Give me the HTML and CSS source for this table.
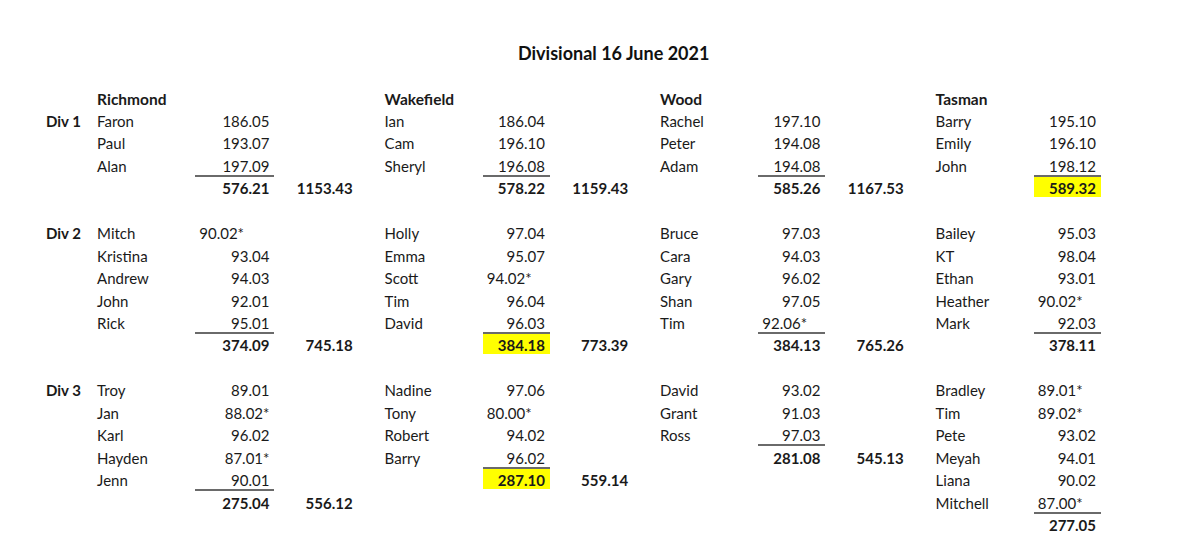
FILE: index.html
```html
<!DOCTYPE html>
<html lang="en">
<head>
<meta charset="utf-8">
<title>Divisional 16 June 2021</title>
<link rel="stylesheet" href="styles.css">
</head>
<body>
<main class="sheet">
  <h1 class="title">Divisional 16 June 2021</h1>
  <table class="grid">
    <colgroup>
      <col class="c-label">
      <col class="c-name"><col class="c-score-wide"><col class="c-total">
      <col class="c-name"><col class="c-score"><col class="c-total">
      <col class="c-name"><col class="c-score"><col class="c-total">
      <col class="c-name"><col class="c-score">
    </colgroup>
    <tbody>
      <tr>
        <td></td>
        <td class="team">Richmond</td><td></td><td></td>
        <td class="team">Wakefield</td><td></td><td></td>
        <td class="team">Wood</td><td></td><td></td>
        <td class="team">Tasman</td><td></td>
      </tr>
      <tr>
        <td class="div">Div 1</td>
        <td class="name">Faron</td><td class="num">186.05</td><td></td>
        <td class="name">Ian</td><td class="num">186.04</td><td></td>
        <td class="name">Rachel</td><td class="num">197.10</td><td></td>
        <td class="name">Barry</td><td class="num">195.10</td>
      </tr>
      <tr>
        <td></td>
        <td class="name">Paul</td><td class="num">193.07</td><td></td>
        <td class="name">Cam</td><td class="num">196.10</td><td></td>
        <td class="name">Peter</td><td class="num">194.08</td><td></td>
        <td class="name">Emily</td><td class="num">196.10</td>
      </tr>
      <tr>
        <td></td>
        <td class="name">Alan</td><td class="num">197.09</td><td></td>
        <td class="name">Sheryl</td><td class="num">196.08</td><td></td>
        <td class="name">Adam</td><td class="num">194.08</td><td></td>
        <td class="name">John</td><td class="num">198.12</td>
      </tr>
      <tr>
        <td></td>
        <td></td><td class="num sum">576.21</td><td class="grand">1153.43</td>
        <td></td><td class="num sum">578.22</td><td class="grand">1159.43</td>
        <td></td><td class="num sum">585.26</td><td class="grand">1167.53</td>
        <td></td><td class="num sum hl">589.32</td>
      </tr>
      <tr class="blank"><td colspan="12"></td></tr>
      <tr>
        <td class="div">Div 2</td>
        <td class="name">Mitch</td><td class="txt">90.02*</td><td></td>
        <td class="name">Holly</td><td class="num">97.04</td><td></td>
        <td class="name">Bruce</td><td class="num">97.03</td><td></td>
        <td class="name">Bailey</td><td class="num">95.03</td>
      </tr>
      <tr>
        <td></td>
        <td class="name">Kristina</td><td class="num">93.04</td><td></td>
        <td class="name">Emma</td><td class="num">95.07</td><td></td>
        <td class="name">Cara</td><td class="num">94.03</td><td></td>
        <td class="name">KT</td><td class="num">98.04</td>
      </tr>
      <tr>
        <td></td>
        <td class="name">Andrew</td><td class="num">94.03</td><td></td>
        <td class="name">Scott</td><td class="txt">94.02*</td><td></td>
        <td class="name">Gary</td><td class="num">96.02</td><td></td>
        <td class="name">Ethan</td><td class="num">93.01</td>
      </tr>
      <tr>
        <td></td>
        <td class="name">John</td><td class="num">92.01</td><td></td>
        <td class="name">Tim</td><td class="num">96.04</td><td></td>
        <td class="name">Shan</td><td class="num">97.05</td><td></td>
        <td class="name">Heather</td><td class="txt">90.02*</td>
      </tr>
      <tr>
        <td></td>
        <td class="name">Rick</td><td class="num">95.01</td><td></td>
        <td class="name">David</td><td class="num">96.03</td><td></td>
        <td class="name">Tim</td><td class="txt">92.06*</td><td></td>
        <td class="name">Mark</td><td class="num">92.03</td>
      </tr>
      <tr>
        <td></td>
        <td></td><td class="num sum">374.09</td><td class="grand">745.18</td>
        <td></td><td class="num sum hl">384.18</td><td class="grand">773.39</td>
        <td></td><td class="num sum">384.13</td><td class="grand">765.26</td>
        <td></td><td class="num sum">378.11</td>
      </tr>
      <tr class="blank"><td colspan="12"></td></tr>
      <tr>
        <td class="div">Div 3</td>
        <td class="name">Troy</td><td class="num">89.01</td><td></td>
        <td class="name">Nadine</td><td class="num">97.06</td><td></td>
        <td class="name">David</td><td class="num">93.02</td><td></td>
        <td class="name">Bradley</td><td class="txt">89.01*</td>
      </tr>
      <tr>
        <td></td>
        <td class="name">Jan</td><td class="num">88.02*</td><td></td>
        <td class="name">Tony</td><td class="txt">80.00*</td><td></td>
        <td class="name">Grant</td><td class="num">91.03</td><td></td>
        <td class="name">Tim</td><td class="txt">89.02*</td>
      </tr>
      <tr>
        <td></td>
        <td class="name">Karl</td><td class="num">96.02</td><td></td>
        <td class="name">Robert</td><td class="num">94.02</td><td></td>
        <td class="name">Ross</td><td class="num">97.03</td><td></td>
        <td class="name">Pete</td><td class="num">93.02</td>
      </tr>
      <tr>
        <td></td>
        <td class="name">Hayden</td><td class="num">87.01*</td><td></td>
        <td class="name">Barry</td><td class="num">96.02</td><td></td>
        <td></td><td class="num sum">281.08</td><td class="grand">545.13</td>
        <td class="name">Meyah</td><td class="num">94.01</td>
      </tr>
      <tr>
        <td></td>
        <td class="name">Jenn</td><td class="num">90.01</td><td></td>
        <td></td><td class="num sum hl">287.10</td><td class="grand">559.14</td>
        <td></td><td></td><td></td>
        <td class="name">Liana</td><td class="num">90.02</td>
      </tr>
      <tr>
        <td></td>
        <td></td><td class="num sum">275.04</td><td class="grand">556.12</td>
        <td></td><td></td><td></td>
        <td></td><td></td><td></td>
        <td class="name">Mitchell</td><td class="txt">87.00*</td>
      </tr>
      <tr>
        <td></td>
        <td></td><td></td><td></td>
        <td></td><td></td><td></td>
        <td></td><td></td><td></td>
        <td></td><td class="num sum">277.05</td>
      </tr>
    </tbody>
  </table>
</main>
</body>
</html>
```

FILE: styles.css
```css
html, body {
  margin: 0;
  padding: 0;
  background: #ffffff;
}

body {
  font-family: Lato, "Open Sans", "Liberation Sans", sans-serif;
  color: #1a1a1a;
  overflow: hidden;
}

.sheet {
  padding: 42px 0 0 43px;
}

.title {
  margin: 0 0 21px 475px;
  font-size: 18px;
  line-height: 22px;
  font-weight: 700;
  color: #111;
}

.grid {
  table-layout: fixed;
  border-collapse: separate;
  border-spacing: 0;
  width: 1058px;
  font-size: 15px;
  line-height: 17px;
}

.c-label { width: 51px; }
.c-name { width: 101px; }
.c-score-wide { width: 79px; }
.c-score { width: 67px; }
.c-total { width: 107px; }

.grid tr {
  height: 22.46px;
}

.grid td {
  padding: 0;
  vertical-align: bottom;
  white-space: nowrap;
}

.grid td.div {
  font-weight: 700;
  padding-left: 3px;
}

.grid td.team {
  font-weight: 700;
  font-size: 15.5px;
  line-height: 15px;
  padding-left: 3px;
}

.grid td.name {
  padding-left: 3px;
}

.grid td.num {
  text-align: right;
  padding-right: 5px;
}

.grid td.txt {
  text-align: left;
  padding-left: 4px;
}

.grid td.sum {
  font-weight: 700;
  border-top: 2px solid #6a6a6a;
}

.grid td.hl {
  background: #ffff00;
}

.grid td.grand {
  font-weight: 700;
  text-align: right;
  padding-right: 29px;
}
```
